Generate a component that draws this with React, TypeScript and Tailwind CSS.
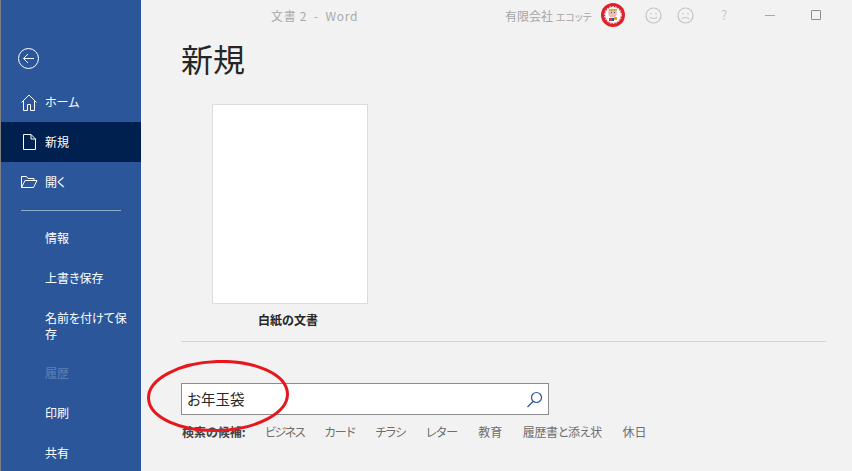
function Row({ icon, label, active, disabled, h = "h-10" }: { icon?: React.ReactNode; label: React.ReactNode; active?: boolean; disabled?: boolean; h?: string }) {
  return (
    <div className={`flex items-center shrink-0 ${h} ${active ? "bg-[#002050]" : ""}`}>
      <div className="w-[44px] flex justify-center pl-[12px] shrink-0">{icon}</div>
      <div className={`text-[12px] leading-[16px] w-[84px] ${disabled ? "text-[#5f80b5]" : "text-white"}`}>{label}</div>
    </div>
  );
}

const Suggest = [
  { t: "ビジネス", c: "tracking-[-1.5px]" },
  { t: "カード", c: "tracking-[-0.7px]" },
  { t: "チラシ", c: "tracking-[-0.7px]" },
  { t: "レター", c: "tracking-[-0.4px]" },
  { t: "教育", c: "" },
  { t: "履歴書と添え状", c: "tracking-[-0.3px]" },
  { t: "休日", c: "" },
];

export default function App() {
  return (
    <div className="relative w-[852px] h-[471px] overflow-hidden flex bg-[#f2f2f2] font-['Noto_Sans_CJK_JP','Noto_Sans',sans-serif] [font-feature-settings:'palt']">
      <aside className="w-[141px] h-full shrink-0 bg-[#2b579a] border-l border-[#808080] flex flex-col">
        <div className="h-[82px] shrink-0 pl-[17px] pt-[48px]">
          <svg width="21" height="21" viewBox="0 0 21 21" fill="none" stroke="#fff" strokeWidth="1">
            <circle cx="10.5" cy="10.5" r="10" />
            <path d="M16 10.5H5.5M10 6l-4.5 4.5L10 15" />
          </svg>
        </div>
        <Row
          label="ホーム"
          icon={
            <svg width="16" height="17" viewBox="0 0 16 17" fill="none" stroke="#fff" strokeWidth="1">
              <path d="M.5 8.5 8 1l7.5 7.5M2.5 7v9.5h4v-6h3v6h4V7" />
            </svg>
          }
        />
        <Row
          active
          label="新規"
          icon={
            <svg width="13" height="16" viewBox="0 0 13 16" fill="none" stroke="#fff" strokeWidth="1">
              <path d="M.5.5h7.5l4.5 4.5v10.5H.5zM8 .5V5h4.5" />
            </svg>
          }
        />
        <Row
          label="開く"
          icon={
            <svg width="17" height="12" viewBox="0 0 17 12" fill="none" stroke="#fff" strokeWidth="1">
              <path d="M.5 11.5V.5h5l1.5 2h6v2M.5 11.5h12l3.5-7H4z" />
            </svg>
          }
        />
        <div className="h-[16px] shrink-0 flex items-center pl-5">
          <div className="w-[100px] h-px bg-[#8eaacb]" />
        </div>
        <Row label="情報" />
        <Row label="上書き保存" />
        <Row h="h-[55px]" label="名前を付けて保存" />
        <Row label="履歴" disabled />
        <Row label="印刷" />
        <Row label="共有" />
      </aside>

      <main className="flex-1 min-w-0 flex flex-col pl-10">
        <header className="h-[30px] shrink-0 flex items-center text-[#a6a6a6] text-[12px]">
          <div className="ml-[90px] w-[234px] pt-[2px] text-[#aaaaaa] tracking-[0.7px]">文書 2&nbsp; -&nbsp; Word</div>
          <div className="w-[96px] pt-[2px] whitespace-nowrap">有限会社 <span className="text-[10px]">エコッテ</span></div>
          <svg width="24" height="24" viewBox="0 0 24 24" className="shrink-0">
            <circle cx="12" cy="12" r="12" fill="#e0202a" />
            <circle cx="12" cy="12" r="8" fill="#fff" />
            <circle cx="12" cy="12" r="8.5" fill="none" stroke="#fff" strokeWidth="1" strokeDasharray="1.5 1.5" />
            <circle cx="11.5" cy="10" r="4.5" fill="#f2bcbc" />
            <rect x="8" y="6" width="8" height="2" fill="#b8b860" />
            <rect x="10" y="9" width="1" height="1" fill="#444" />
            <rect x="13" y="9" width="1" height="1" fill="#444" />
            <rect x="8" y="15" width="3" height="3" fill="#d04040" />
            <rect x="11" y="15" width="2" height="3" fill="#3050a0" />
            <rect x="13" y="14" width="3" height="3" fill="#e0a020" />
          </svg>
          <svg width="17" height="17" viewBox="0 0 17 17" fill="none" stroke="#c4c4c4" strokeWidth="1.2" className="ml-[20px] shrink-0">
            <circle cx="8.5" cy="8.5" r="7.5" />
            <path d="M5 10c1 2 6 2 7 0M6 6v1.5M11 6v1.5" />
          </svg>
          <svg width="17" height="17" viewBox="0 0 17 17" fill="none" stroke="#c4c4c4" strokeWidth="1.2" className="ml-[15px] shrink-0">
            <circle cx="8.5" cy="8.5" r="7.5" />
            <path d="M5 12c1-2 6-2 7 0M6 6v1.5M11 6v1.5" />
          </svg>
          <span className="ml-[27px] w-[8px] text-[#c8c8c8] text-[13px]">?</span>
          <div className="ml-[36px] w-[10px] h-px bg-[#a6a6a6]" />
          <div className="ml-[36px] w-[10px] h-[10px] border border-[#8c8c8c] rounded-[1px]" />
        </header>

        <h1 className="h-[74px] shrink-0 pt-[4px] text-[32px] leading-[48px] font-normal text-[#262626]">新規</h1>

        <div className="pl-[31px] shrink-0">
          <div className="w-[156px] h-[200px] bg-white border border-[#dcdcdc]" />
          <div className="w-[152px] h-[37px] pt-[8px] text-center text-[12px] leading-[16px] font-bold text-[#262626]">白紙の文書</div>
        </div>

        <div className="w-[645px] h-px bg-[#d2d2d2] shrink-0" />

        <div className="mt-[41px] w-[368px] h-[32px] shrink-0 bg-white border border-[#8c8c8c] flex items-center justify-between pl-[5px] pr-[5px]">
          <span className="text-[14.5px] text-[#262626]">お年玉袋</span>
          <svg width="17" height="17" viewBox="0 0 17 17" fill="none" stroke="#2b579a" strokeWidth="1.2">
            <circle cx="10.5" cy="6.5" r="5" />
            <path d="M7 10.5 1.5 16" />
          </svg>
        </div>

        <div className="h-[34px] shrink-0 flex items-center text-[12px] text-[#6e6e6e] whitespace-nowrap">
          <span className="font-bold text-[#444] w-[84px] pl-[1px]">検索の候補:</span>
          <div className="flex gap-[20.5px]">
            {Suggest.map((s) => (
              <span key={s.t} className={s.c}>{s.t}</span>
            ))}
          </div>
        </div>
      </main>

      <svg className="absolute left-[147px] top-[360px] pointer-events-none" width="144" height="74" viewBox="0 0 144 74" fill="none" stroke="#e8171f" strokeWidth="3">
        <ellipse cx="71" cy="36" rx="69.5" ry="34.5" transform="rotate(-2 71 36)" />
      </svg>
    </div>
  );
}
